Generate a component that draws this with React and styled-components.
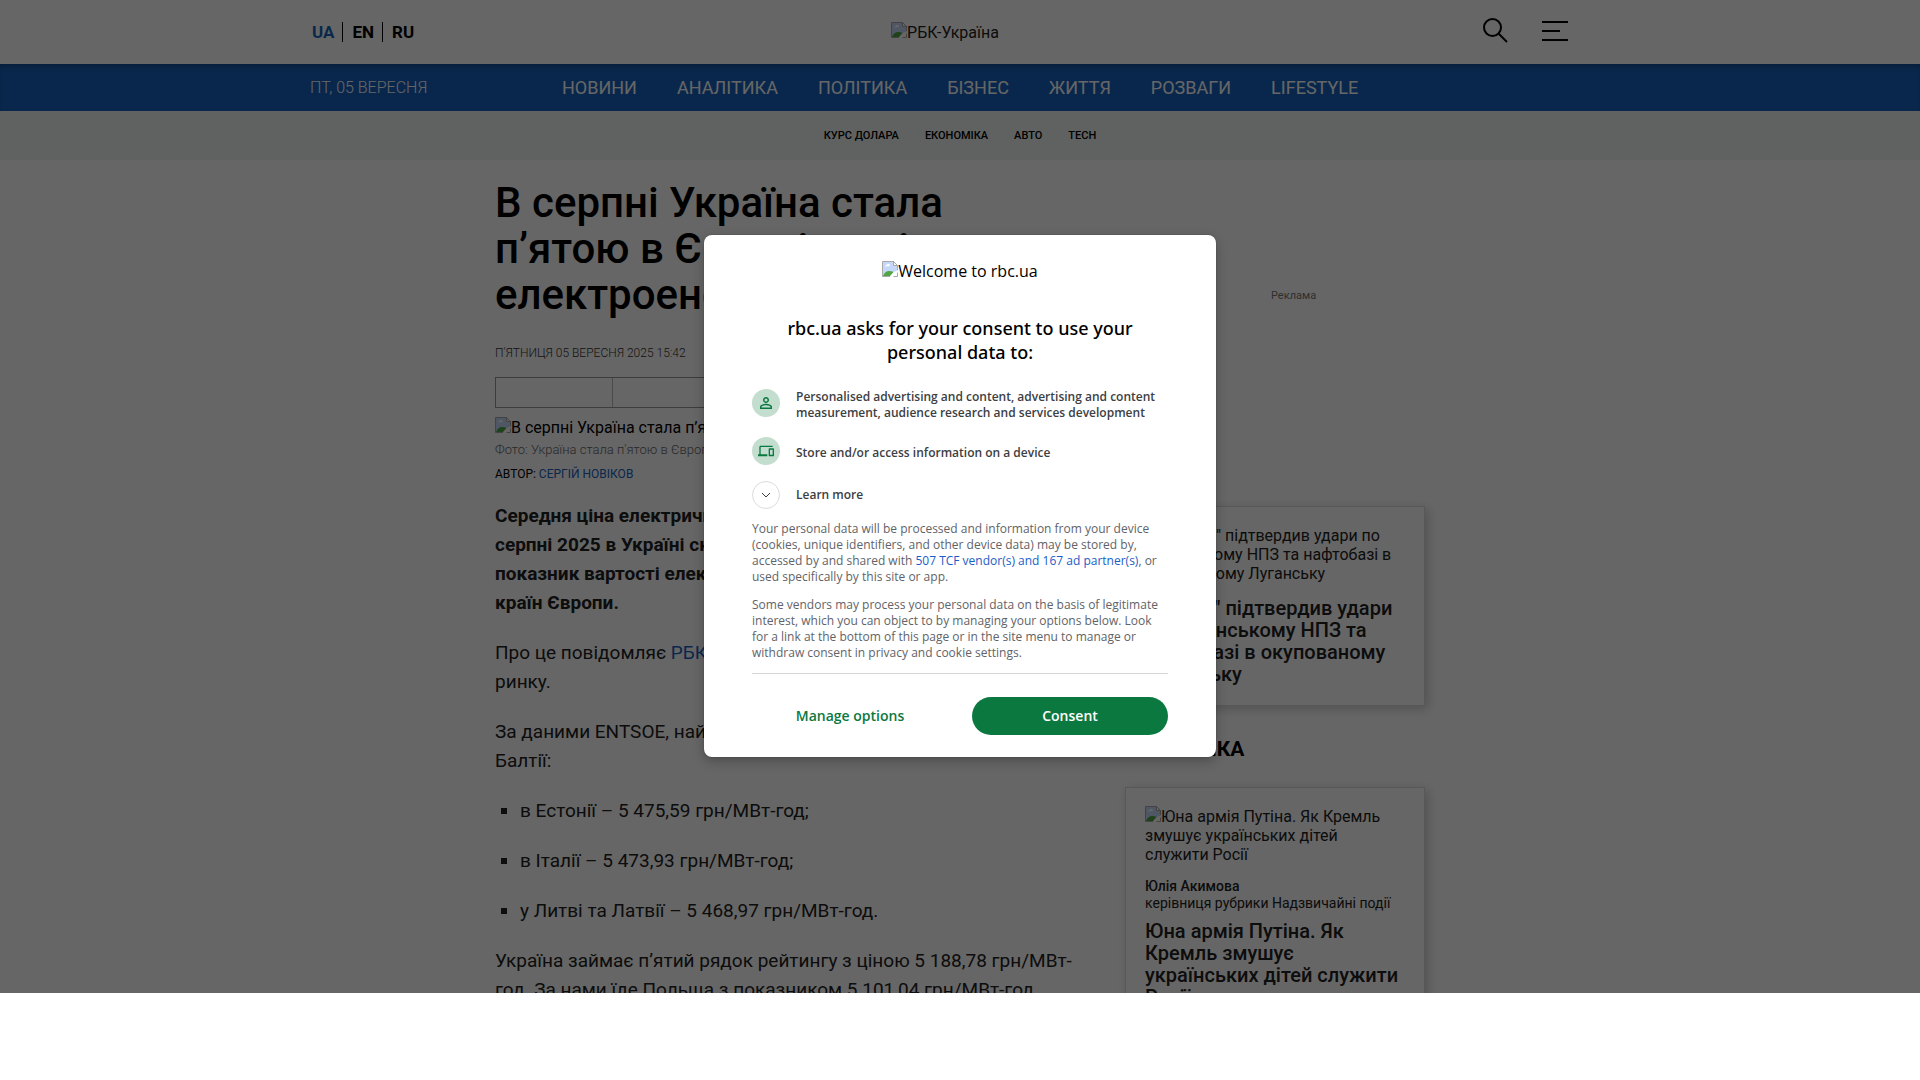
import React from "react";
import styled, { createGlobalStyle } from "styled-components";

const GlobalStyle = createGlobalStyle`
  *, *::before, *::after { box-sizing: border-box; }
  body { margin: 0; background: #fff; color: #222; font: 16px/19px Roboto, "Liberation Sans", sans-serif; }
  a { color: inherit; text-decoration: none; }
  button { border: 0; background: none; padding: 0; font: inherit; cursor: pointer; }
  h1, h2, h3, p, ul, figure { margin: 0; padding: 0; }
`;

const Viewport = styled.div`
  position: relative;
  height: calc(92vh - 1px);
  overflow: hidden;
`;

const TopBar = styled.header`
  height: 64px;
  padding: 0 16px;
`;
const TopInner = styled.div`
  max-width: 1300px;
  height: 100%;
  margin: 0 auto;
  display: grid;
  grid-template-columns: 1fr auto 1fr;
  align-items: center;
`;
const Languages = styled.nav`
  display: flex;
  height: 20px;
  font-size: 17px;
  font-weight: 700;
  line-height: 20px;
`;
const Language = styled.a`
  padding: 0 8px;
  color: ${(p) => (p.$active ? "#1b62bf" : "#000")};
  &:first-child { padding-left: 2px; }
  & + & { border-left: 1px solid #000; padding-left: 9px; }
`;
const Tools = styled.div`
  display: flex;
  justify-content: flex-end;
  gap: 34px;
  padding: 0 42px 3px 0;
`;
const Tool = styled.button`
  display: flex;
  align-items: center;
  height: 26px;
`;
const Logo = styled.a`
  padding-right: 30px;
`;

const Broken = styled.svg`
  width: 16px;
  height: 16px;
  vertical-align: baseline;
`;

const MainNav = styled.nav`
  background: #1862bd;
  height: 47px;
  padding: 0 16px;
  box-shadow: inset 0 6px 6px -4px rgba(0, 0, 0, 0.3);
  color: #fff;
`;
const NavInner = styled.div`
  max-width: 1300px;
  margin: 0 auto;
  display: flex;
  align-items: center;
  height: 100%;
`;
const Today = styled.time`
  flex: 0 0 252px;
  font-weight: 300;
`;
const Sections = styled.div`
  display: flex;
  gap: 40px;
  font-size: 18px;
`;
const SubNav = styled.nav`
  display: flex;
  justify-content: center;
  align-items: center;
  gap: 26px;
  height: 49px;
  background: #eff5f3;
  color: #000;
  font-size: 11px;
  font-weight: 500;
`;

const Content = styled.main`
  max-width: 930px;
  margin: 0 auto;
  display: grid;
  grid-template-columns: minmax(0, 600px) 300px;
  justify-content: space-between;
`;
const Article = styled.article`
  padding-top: 20px;
`;
const Headline = styled.h1`
  max-width: 500px;
  color: #000;
  font-size: 42px;
  line-height: 46px;
  font-weight: 500;
`;
const Published = styled.time`
  display: block;
  margin: 27px 0 16px;
  color: #333;
  font-size: 12px;
  line-height: 16px;
  font-weight: 300;
`;
const ShareRow = styled.div`
  display: grid;
  grid-template-columns: repeat(5, 117px);
  width: max-content;
  border: solid #999;
  border-width: 1px 0 1px 1px;
`;
const ShareCell = styled.span`
  height: 29px;
  border-right: 1px solid #bbb;
`;
const Figure = styled.figure`
  margin-top: 9px;
  color: #000;
`;
const Caption = styled.figcaption`
  margin-top: 5px;
  color: #666;
  font-size: 13px;
  line-height: 16px;
  font-weight: 300;
`;
const Byline = styled.p`
  margin: 8px 0 19px;
  color: #000;
  font-size: 12px;
  line-height: 16px;
  text-transform: uppercase;
`;
const BlueLink = styled.a`
  color: #1b62bf;
`;
const Text = styled.p`
  margin-bottom: 21px;
  font-size: 19px;
  line-height: 29px;
  font-weight: ${(p) => (p.$lead ? 700 : 400)};
`;
const Prices = styled.ul`
  padding-left: 25px;
  list-style: square;
  font-size: 19px;
  line-height: 29px;
`;
const Price = styled.li`
  margin-bottom: 21px;
`;

const Sidebar = styled.aside`
  padding-top: 126px;
`;
const AdLabel = styled.div`
  padding-left: 146px;
  height: 220px;
  color: #777;
  font-size: 11px;
`;
const Card = styled.section`
  padding: 18px 19px 20px;
  border: 1px solid #ddd;
  box-shadow: 3px 3px 10px rgba(0, 0, 0, 0.2);
  background: #fff;
`;
const CardTitle = styled.h3`
  font-size: 20px;
  line-height: 22px;
  font-weight: 500;
`;
const CardImage = styled.div`
  margin: 0 0 14px;
`;
const SideHeading = styled.h2`
  margin: 31px 0 25px;
  color: #000;
  font-size: 21px;
  line-height: 25px;
  font-weight: 700;
`;
const Columnist = styled.p`
  margin-bottom: 8px;
  font-size: 14px;
  line-height: 17px;
`;
const ColumnistName = styled.span`
  display: block;
  font-weight: 500;
`;

const Overlay = styled.div`
  position: absolute;
  inset: 0;
  display: grid;
  place-items: center;
  background: rgba(0, 0, 0, 0.6);
`;
const Dialog = styled.section`
  width: 512px;
  max-width: 100%;
  padding: 24px 48px 22px;
  border-radius: 8px;
  background: #fff;
  box-shadow: 0 0 2px rgba(0, 0, 0, 0.2), 0 4px 12px rgba(0, 0, 0, 0.25);
  color: #5f6368;
  font: 12px/16px "Open Sans", "Noto Sans", sans-serif;
`;
const Welcome = styled.div`
  color: #000;
  font-size: 16px;
  line-height: 24px;
  text-align: center;
`;
const DialogTitle = styled.h2`
  margin: 33px 24px 25px;
  color: #000;
  font-family: "Noto Sans", sans-serif;
  font-size: 18px;
  line-height: 24px;
  font-weight: 500;
  text-align: center;
`;
const Purposes = styled.ul`
  display: grid;
  gap: 16px;
  list-style: none;
`;
const Purpose = styled.li`
  display: flex;
  align-items: center;
  gap: 16px;
  min-height: 32px;
  color: #3c4043;
  font-weight: 600;
`;
const Disc = styled.span`
  flex: none;
  display: grid;
  place-items: center;
  width: 28px;
  height: 28px;
  border-radius: 50%;
  border: ${(p) => (p.$outline ? "1px solid #dadce0" : "0")};
  margin-bottom: ${(p) => (p.$outline ? "0" : "4px")};
  background: ${(p) => (p.$outline ? "#fff" : "#c3ddcf")};
`;
const LearnMore = styled.button`
  display: flex;
  align-items: center;
  gap: 16px;
  margin: 12px 0;
  color: #3c4043;
  font-weight: 600;
`;
const Notice = styled.p`
  & + & { margin-top: 12px; }
`;
const VendorLink = styled.a`
  color: #1a5dc8;
`;
const Actions = styled.div`
  display: grid;
  grid-template-columns: 1fr 1fr;
  gap: 24px;
  margin-top: 12px;
  padding-top: 23px;
  border-top: 1px solid #d5d7da;
`;
const Action = styled.button`
  height: 38px;
  border-radius: 19px;
  background: ${(p) => (p.$primary ? "#0b7840" : "transparent")};
  color: ${(p) => (p.$primary ? "#fff" : "#0b7840")};
  font-size: 14px;
  font-weight: 600;
`;

const BrokenImage = ({ alt }) => (
  <>
    <Broken viewBox="0 0 16 16" aria-hidden="true">
      <path d="M.5 15.500V.5h11l4 4v5" fill="#c6d8fa" stroke="#a9a9a9" />
      <path d="M11.500.5v4h4z" fill="#fff" stroke="#a9a9a9" />
      <path d="M3 5.500q0-1.500 1.500-1.500.5-1.500 2-1 1.500 0 1.500 2z" fill="#fff" />
      <path d="M1 15q2-5 6-5 3 0 4.500 1L8 15z" fill="#51a544" />
      <path d="M8 16l8-7v2l-5 5z" fill="#fff" />
      <path d="M11.500 15.500h4v-4" fill="none" stroke="#a9a9a9" />
      <path d="M.5 15.500h7.500" stroke="#a9a9a9" />
    </Broken>
    {alt}
  </>
);

const languages = ["UA", "EN", "RU"];
const sections = ["НОВИНИ", "АНАЛІТИКА", "ПОЛІТИКА", "БІЗНЕС", "ЖИТТЯ", "РОЗВАГИ", "LIFESTYLE"];
const topics = ["КУРС ДОЛАРА", "ЕКОНОМІКА", "АВТО", "TECH"];
const prices = [
  "в Естонії – 5 475,59 грн/МВт-год;",
  "в Італії – 5 473,93 грн/МВт-год;",
  "у Литві та Латвії – 5 468,97 грн/МВт-год.",
];

function SiteHeader() {
  return (
    <>
      <TopBar>
        <TopInner>
          <Languages>
            {languages.map((l, i) => (
              <Language key={l} href="#" $active={i === 0}>{l}</Language>
            ))}
          </Languages>
          <Logo href="#"><BrokenImage alt="РБК-Україна" /></Logo>
          <Tools>
            <Tool aria-label="Пошук">
              <svg width="25" height="25" viewBox="0 0 25 25" fill="none" stroke="#000" strokeWidth="2">
                <circle cx="9.500" cy="9.500" r="8.500" />
                <path d="M15.500 15.500l8.500 8.500" />
              </svg>
            </Tool>
            <Tool aria-label="Меню">
              <svg width="26" height="20" viewBox="0 0 26 20" fill="none" stroke="#000" strokeWidth="2">
                <path d="M0 1h26M0 10h18M0 19h26" />
              </svg>
            </Tool>
          </Tools>
        </TopInner>
      </TopBar>
      <MainNav>
        <NavInner>
          <Today>ПТ, 05 ВЕРЕСНЯ</Today>
          <Sections>{sections.map((s) => <a key={s} href="#">{s}</a>)}</Sections>
        </NavInner>
      </MainNav>
      <SubNav>{topics.map((t) => <a key={t} href="#">{t}</a>)}</SubNav>
    </>
  );
}

function ConsentDialog() {
  return (
    <Overlay>
      <Dialog role="dialog" aria-labelledby="consent-title">
        <Welcome><BrokenImage alt="Welcome to rbc.ua" /></Welcome>
        <DialogTitle id="consent-title">rbc.ua asks for your consent to use your personal data to:</DialogTitle>
        <Purposes>
          <Purpose>
            <Disc>
              <svg width="18" height="18" viewBox="0 0 24 24" fill="#0b7840">
                <path d="M12 5.900a2.100 2.100 0 1 1 0 4.200 2.100 2.100 0 0 1 0-4.200m0 9c2.970 0 6.100 1.460 6.100 2.100v1.100H5.900V17c0-.640 3.130-2.100 6.100-2.100M12 4C9.790 4 8 5.790 8 8s1.790 4 4 4 4-1.790 4-4-1.790-4-4-4zm0 9c-2.670 0-8 1.340-8 4v3h16v-3c0-2.660-5.330-4-8-4z" />
              </svg>
            </Disc>
            <span>Personalised advertising and content, advertising and content measurement, audience research and services development</span>
          </Purpose>
          <Purpose>
            <Disc>
              <svg width="16" height="16" viewBox="0 0 24 24" fill="#0b7840">
                <path d="M4 6h18V4H4c-1.100 0-2 .9-2 2v11H0v3h14v-3H4V6zm19 2h-6c-.55 0-1 .45-1 1v10c0 .55.45 1 1 1h6c.55 0 1-.45 1-1V9c0-.55-.45-1-1-1zm-1 9.500h-4V10h4v7.500z" />
              </svg>
            </Disc>
            <span>Store and/or access information on a device</span>
          </Purpose>
        </Purposes>
        <LearnMore>
          <Disc $outline>
            <svg width="10" height="6" viewBox="0 0 10 6" fill="none" stroke="#3c4043">
              <path d="M1 1l4 4 4-4" />
            </svg>
          </Disc>
          Learn more
        </LearnMore>
        <Notice>
          Your personal data will be processed and information from your device (cookies, unique identifiers, and other
          device data) may be stored by, accessed by and shared with{" "}
          <VendorLink href="#">507 TCF vendor(s) and 167 ad partner(s)</VendorLink>, or used specifically by this site or app.
        </Notice>
        <Notice>
          Some vendors may process your personal data on the basis of legitimate interest, which you can object to by
          managing your options below. Look for a link at the bottom of this page or in the site menu to manage or
          withdraw consent in privacy and cookie settings.
        </Notice>
        <Actions>
          <Action>Manage options</Action>
          <Action $primary>Consent</Action>
        </Actions>
      </Dialog>
    </Overlay>
  );
}

export default function App() {
  return (
    <Viewport>
      <GlobalStyle />
      <SiteHeader />
      <Content>
        <Article>
          <Headline>В серпні Україна стала п’ятою в Європі за ціною електроенергії</Headline>
          <Published>П'ЯТНИЦЯ 05 ВЕРЕСНЯ 2025 15:42</Published>
          <ShareRow>{[0, 1, 2, 3, 4].map((n) => <ShareCell key={n} />)}</ShareRow>
          <Figure>
            <BrokenImage alt="В серпні Україна стала п’ятою в Європі за ціною електроенергії" />
            <Caption>Фото: Україна стала п'ятою в Європі за ціною електроенергії</Caption>
          </Figure>
          <Byline>Автор: <BlueLink href="#">Сергій Новіков</BlueLink></Byline>
          <Text $lead>
            Середня ціна електричної енергії на ринку<br />
            серпні 2025 в Україні склала 5 188 грн. Це<br />
            показник вартості електроенергії серед<br />
            країн Європи.
          </Text>
          <Text>
            Про це повідомляє <BlueLink href="#">РБК-Україна</BlueLink> з посиланням на дані<br />
            ринку.
          </Text>
          <Text>
            За даними ENTSOE, найвищі ціни були в країнах<br />
            Балтії:
          </Text>
          <Prices>{prices.map((p) => <Price key={p}>{p}</Price>)}</Prices>
          <Text>
            Україна займає п’ятий рядок рейтингу з ціною 5 188,78 грн/МВт-год. За нами їде Польща з показником
            5 101,04 грн/МВт-год.
          </Text>
        </Article>
        <Sidebar>
          <AdLabel>Реклама</AdLabel>
          <Card>
            <CardImage>
              <BrokenImage alt={'"Мадяр" підтвердив удари по Луганському НПЗ та нафтобазі в окупованому Луганську'} />
            </CardImage>
            <CardTitle>"Мадяр" підтвердив удари по Луганському НПЗ та нафтобазі в окупованому Луганську</CardTitle>
          </Card>
          <SideHeading>АНАЛІТИКА</SideHeading>
          <Card>
            <CardImage><BrokenImage alt="Юна армія Путіна. Як Кремль змушує українських дітей служити Росії" /></CardImage>
            <Columnist><ColumnistName>Юлія Акимова</ColumnistName>керівниця рубрики Надзвичайні події</Columnist>
            <CardTitle>Юна армія Путіна. Як Кремль змушує українських дітей служити Росії</CardTitle>
          </Card>
        </Sidebar>
      </Content>
      <ConsentDialog />
    </Viewport>
  );
}
